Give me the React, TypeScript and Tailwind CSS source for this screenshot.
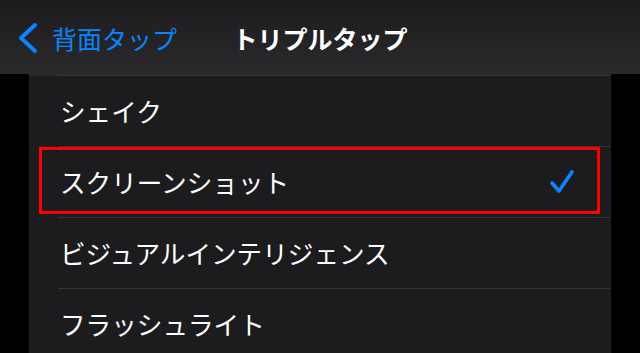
import React from "react";

const rows = ["シェイク", "スクリーンショット", "ビジュアルインテリジェンス", "フラッシュライト"];

export default function App() {
  return (
    <div
      className="w-[640px] h-[353px] overflow-hidden bg-black"
      style={{ fontFamily: '"Noto Sans CJK JP", "Noto Sans", sans-serif' }}
    >
      <header className="h-[74px] grid grid-cols-[1fr_auto_1fr] items-center bg-gradient-to-b from-[#1c1c1e] to-[#2a2a2c]">
        <div className="flex items-center pl-[18px] pt-[2px] text-[#0a84ff]">
          <svg width="22" height="32" viewBox="0 0 22 32" className="mr-[12px]">
            <polyline
              points="17,3 3,16 17,29"
              fill="none"
              stroke="#0a84ff"
              strokeWidth="4"
              strokeLinecap="round"
              strokeLinejoin="round"
            />
          </svg>
          <span className="text-[25px] leading-none">背面タップ</span>
        </div>
        <div className="text-white text-[25px] font-bold leading-none pt-[2px]">トリプルタップ</div>
        <div />
      </header>
      <div className="mx-[29px] w-[582px] bg-[#1c1c1e]">
        <div className="h-[2px] bg-[#29292b] flex justify-end">
          <div className="w-[553px] h-[1px] mt-[1px] bg-[#343436]" />
        </div>
        {rows.map((r, i) => (
          <div key={r} className="relative">
            {i > 0 && <div className="ml-[29px] h-[1px] bg-[#343436]" />}
            <div className="h-[70px] flex items-center pl-[31px] pr-[36px]">
              <span className="flex-1 text-[25.6px] leading-none text-white">{r}</span>
              {i === 1 && (
                <svg width="26" height="26" viewBox="0 0 26 26">
                  <polyline
                    points="3,14 10,22 23,3"
                    fill="none"
                    stroke="#0a84ff"
                    strokeWidth="3.6"
                    strokeLinecap="round"
                    strokeLinejoin="round"
                  />
                </svg>
              )}
            </div>
            {i === 1 && (
              <div className="absolute left-[10px] right-[11px] top-[1px] bottom-[3px] border-[3px] border-[#ff0000]" />
            )}
          </div>
        ))}
      </div>
    </div>
  );
}
